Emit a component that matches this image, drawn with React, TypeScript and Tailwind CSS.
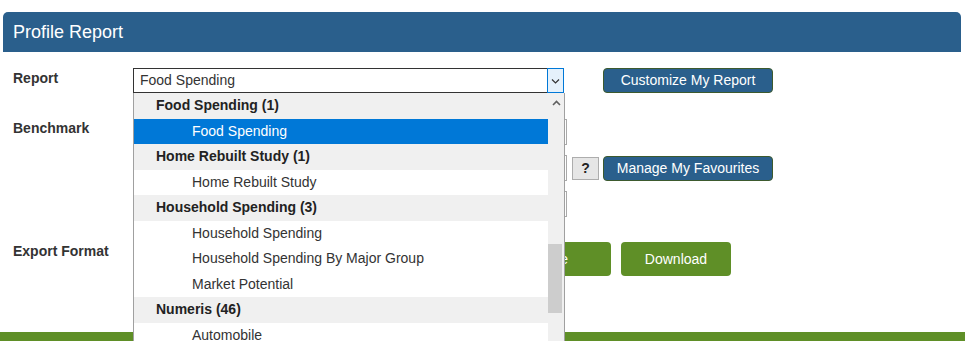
import React from 'react'

const options = [
  { label: 'Food Spending (1)', group: true },
  { label: 'Food Spending', selected: true },
  { label: 'Home Rebuilt Study (1)', group: true },
  { label: 'Home Rebuilt Study' },
  { label: 'Household Spending (3)', group: true },
  { label: 'Household Spending' },
  { label: 'Household Spending By Major Group' },
  { label: 'Market Potential' },
  { label: 'Numeris (46)', group: true },
  { label: 'Automobile' },
]

function Chevron({ up = false, color = '#333' }: { up?: boolean; color?: string }) {
  return (
    <svg width="9" height="6" viewBox="0 0 9 6" fill="none">
      {up ? (
        <polyline points="1,5 4.5,1.5 8,5" stroke={color} strokeWidth="1.6" />
      ) : (
        <polyline points="1,1.5 4.5,5 8,1.5" stroke={color} strokeWidth="1.2" />
      )}
    </svg>
  )
}

function HiddenSelect() {
  return <div className="w-[434px] h-[26px] border border-[#a9a9a9] bg-white" />
}

export default function App() {
  return (
    <div className="h-[341px] overflow-hidden bg-white flex flex-col font-['Liberation_Sans',Arial,sans-serif] text-[14px] text-[#333]">
      <div className="pt-3 pl-[3px] pr-[4px]">
        <div className="h-10 bg-[#2a5f8c] rounded-t-[5px] text-white text-[18px] pl-[10px] flex items-center">
          Profile Report
        </div>
      </div>

      <div className="relative px-[13px]">
        <div className="mt-4 flex items-start">
          <div className="w-[120px] font-bold">Report</div>
          <div className="flex w-[431px] h-[25px]">
            <div className="flex-1 border-y border-l border-[#333] pl-[6px] flex items-center">Food Spending</div>
            <div className="w-[17px] border border-[#0078d7] bg-[#e5f1fb] flex items-center justify-center">
              <Chevron />
            </div>
          </div>
          <button className="ml-[39px] w-[170px] h-[25px] bg-[#2a5f8c] border border-[#3d5a2e] rounded-[4px] text-white">
            Customize My Report
          </button>
        </div>

        <div className="mt-[26px] flex items-start">
          <div className="w-[120px] font-bold -mt-px">Benchmark</div>
          <HiddenSelect />
        </div>

        <div className="mt-[10px] flex items-center">
          <div className="w-[120px]" />
          <HiddenSelect />
          <button className="ml-[5px] w-[27px] h-[23px] bg-[#e6e6e6] border border-[#adadad] font-bold text-[#222]">?</button>
          <button className="ml-[4px] w-[170px] h-[25px] bg-[#2a5f8c] border border-[#3d5a2e] rounded-[4px] text-white">
            Manage My Favourites
          </button>
        </div>

        <div className="mt-[10px] flex items-start">
          <div className="w-[120px]" />
          <HiddenSelect />
        </div>

        <div className="mt-[25px] flex items-start">
          <div className="w-[120px] font-bold -mt-[1px]">Export Format</div>
          <button className="ml-[368px] w-[110px] h-[34px] bg-[#5f8f27] rounded-[4px] text-white text-right pr-[43px]">
            Generate
          </button>
          <button className="ml-[10px] w-[110px] h-[34px] bg-[#5f8f27] rounded-[4px] text-white">Download</button>
        </div>

        <div className="absolute left-[133px] top-[41px] w-[432px] h-[260px] bg-white border-x border-[#a0a0a0] flex">
          <div className="flex-1 flex flex-col">
            {options.map((o) => (
              <div
                key={o.label}
                className={
                  o.group
                    ? 'h-[25.5px] shrink-0 bg-[#f0f0f0] pl-[22px] flex items-center font-bold text-[#222]'
                    : o.selected
                      ? 'h-[25.5px] shrink-0 bg-[#0078d7] pl-[58px] flex items-center text-white'
                      : 'h-[25.5px] shrink-0 pl-[58px] flex items-center text-[#333]'
                }
              >
                {o.label}
              </div>
            ))}
          </div>
          <div className="w-4 bg-[#f0f0f0] flex flex-col">
            <div className="h-[19px] flex items-center justify-center">
              <Chevron up color="#606060" />
            </div>
            <div className="mt-[132px] w-[14px] h-[69px] bg-[#cdcdcd]" />
          </div>
        </div>
      </div>

      <div className="mt-auto h-[9px] bg-[#5f8f27]" />
    </div>
  )
}
